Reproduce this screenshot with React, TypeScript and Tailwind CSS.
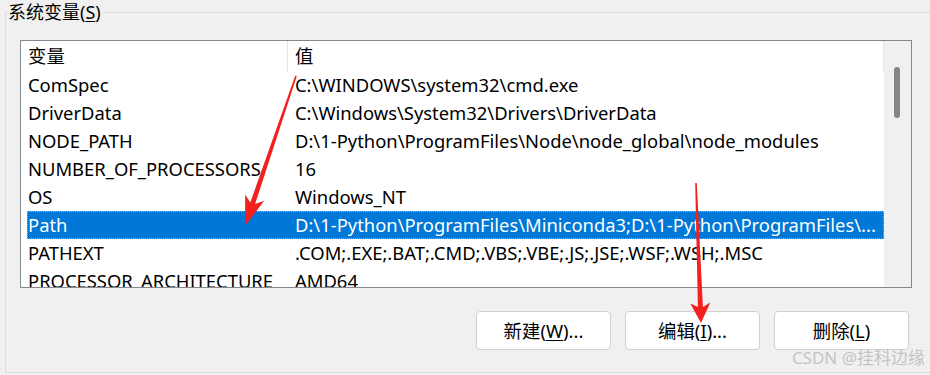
import React from "react";

const rows: [string, string][] = [
  ["ComSpec", "C:\\WINDOWS\\system32\\cmd.exe"],
  ["DriverData", "C:\\Windows\\System32\\Drivers\\DriverData"],
  ["NODE_PATH", "D:\\1-Python\\ProgramFiles\\Node\\node_global\\node_modules"],
  ["NUMBER_OF_PROCESSORS", "16"],
  ["OS", "Windows_NT"],
  ["Path", "D:\\1-Python\\ProgramFiles\\Miniconda3;D:\\1-Python\\ProgramFiles\\..."],
  ["PATHEXT", ".COM;.EXE;.BAT;.CMD;.VBS;.VBE;.JS;.JSE;.WSF;.WSH;.MSC"],
  ["PROCESSOR_ARCHITECTURE", "AMD64"],
];

const font = { fontFamily: '"Noto Sans", "Noto Sans CJK SC", sans-serif' };

function Button({ label, hot, tail }: { label: string; hot: string; tail: string }) {
  return (
    <button className="w-[135px] h-[39px] bg-white border border-[#d0d0d0] rounded-[4px] text-[18.4px] text-black flex items-center justify-center">
      {label}(<span className="underline underline-offset-2">{hot}</span>){tail}
    </button>
  );
}

export default function App() {
  return (
    <div
      className="relative w-[930px] h-[375px] overflow-hidden bg-[#f0f0f0] pt-[12px] pl-[5px] text-black"
      style={font}
    >
      {/* group box */}
      <div className="relative w-[925px] h-[361px] border-t border-l border-b border-[#dcdcdc]">
        <span className="absolute -top-[13px] left-[2px] bg-[#f0f0f0] pr-[2px] text-[18px] leading-[24px]">
          系统变量(<span className="underline underline-offset-2">S</span>)
        </span>

        {/* list view */}
        <div className="mt-[27px] ml-[14px] w-[892px] h-[248px] border border-[#828790] bg-white flex overflow-hidden">
          <div className="flex-1 flex flex-col text-[18.4px]">
            <div className="h-[30px] flex shrink-0">
              <div className="w-[267px] pl-[7px] border-r border-[#e5e5e5] flex items-center">变量</div>
              <div className="flex-1 pl-[7px] border-r border-[#e5e5e5] flex items-center">值</div>
            </div>
            {rows.map(([name, value]) => {
              const sel = name === "Path";
              return (
                <div
                  key={name}
                  className={
                    sel
                      ? "ml-[6px] h-[28px] shrink-0 flex items-center bg-[#0078d7] text-white border border-dotted border-[#f09a3e]"
                      : "ml-[6px] h-[28px] shrink-0 flex items-center border border-transparent"
                  }
                >
                  <div className="w-[260px] shrink-0 whitespace-nowrap overflow-hidden">{name}</div>
                  <div className="pl-[7px] whitespace-nowrap">{value}</div>
                </div>
              );
            })}
          </div>
          {/* scrollbar */}
          <div className="w-[27px] shrink-0 bg-[#f0f0f0] pt-[26px] pl-[10px]">
            <div className="w-[6px] h-[51px] rounded-full bg-[#858585]" />
          </div>
        </div>

        {/* buttons */}
        <div className="mt-[23px] pr-[21px] flex justify-end gap-[14px]">
          <Button label="新建" hot="W" tail="..." />
          <Button label="编辑" hot="I" tail="..." />
          <Button label="删除" hot="L" tail="" />
        </div>
      </div>

      <span className="absolute right-[5px] bottom-[6px] text-[17px] text-[#c4c4c4] leading-[22px]">
        CSDN @挂科边缘
      </span>

      {/* annotation arrows */}
      <svg className="absolute inset-0 pointer-events-none" width="930" height="375">
        <polygon
          fill="#f41f1f"
          points="296.8,76.3 255.1,204.1 264.2,200.8 245,226 245.2,194.4 250.3,202.5 295.2,75.7"
        />
        <polygon
          fill="#f41f1f"
          points="696.8,183 702.9,306.9 710.3,302.6 701,323 690.3,303.4 697.9,307.1 695.2,183"
        />
      </svg>
    </div>
  );
}
